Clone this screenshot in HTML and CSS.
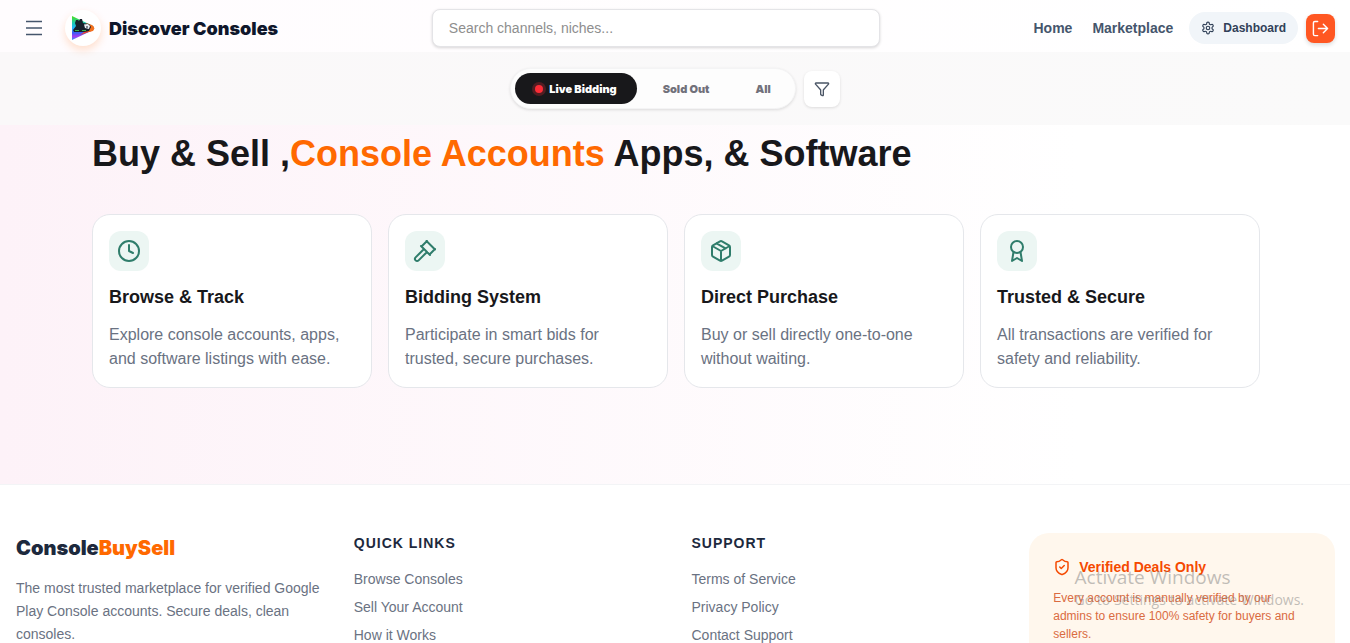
FILE: index.html
```
<!DOCTYPE html>
<html lang="en">
<head>
    <meta charset="UTF-8">
    <meta name="viewport" content="width=device-width, initial-scale=1.0">
    <title>Discover Consoles</title>
    <link rel="stylesheet" href="styles.css">
</head>
<body>
    <header class="header">
        <div class="header-left">
            <button class="menu-btn" type="button" aria-label="Open menu">
                <svg width="20" height="20" viewBox="0 0 20 20" fill="none" stroke="currentColor" stroke-width="1.5"><path d="M2 3.5h16M2 10h16M2 16.5h16"/></svg>
            </button>
            <a class="brand" href="#">
                <span class="brand-logo">
                    <svg width="24" height="26" viewBox="0 0 24 26">
                        <defs>
                            <linearGradient id="playFill" x1="0" y1="0" x2="0" y2="1">
                                <stop offset="0" stop-color="#4fe01a"/>
                                <stop offset=".3" stop-color="#19c8b4"/>
                                <stop offset=".5" stop-color="#1fb6ff"/>
                                <stop offset=".7" stop-color="#3b5bf5"/>
                                <stop offset=".85" stop-color="#a43cf0"/>
                                <stop offset="1" stop-color="#2a9bf5"/>
                            </linearGradient>
                        </defs>
                        <path d="M1 1l20 9.500q4 2.500 0 5L1 25z" fill="url(#playFill)"/>
                        <path d="M9 20l8-6 5 1-1 1z" fill="#f0452d"/>
                        <path d="M15 8l6 2q4 2.500 1 6l-5 1z" fill="#f2701d"/>
                        <path d="M4 8l1-3h2l1 1 1-2h2l1 4 6 1 2 3-2 4-5 1H3l-1-2 3-4z" fill="#16202b"/>
                        <path d="M13 9.500l4-.5 2 2-1 3-4-1z" fill="#e9edf2"/>
                        <path d="M15 12h2" stroke="#16202b"/>
                        <path d="M4 15.500h4M11 15.500h4" stroke="#37b54a"/>
                    </svg>
                </span>
                <span class="brand-name">Discover Consoles</span>
            </a>
        </div>
        <input class="search" type="search" placeholder="Search channels, niches..." aria-label="Search channels">
        <nav class="header-nav">
            <a class="nav-link" href="#">Home</a>
            <a class="nav-link" href="#">Marketplace</a>
            <a class="dashboard-link" href="#">
                <svg width="14" height="14" viewBox="0 0 24 24" fill="none" stroke="currentColor" stroke-width="2" stroke-linecap="round" stroke-linejoin="round"><path d="M12.22 2h-.44a2 2 0 0 0-2 2v.18a2 2 0 0 1-1 1.73l-.43.25a2 2 0 0 1-2 0l-.15-.08a2 2 0 0 0-2.73.73l-.22.38a2 2 0 0 0 .73 2.73l.15.1a2 2 0 0 1 1 1.72v.51a2 2 0 0 1-1 1.74l-.15.09a2 2 0 0 0-.73 2.73l.22.38a2 2 0 0 0 2.73.73l.15-.08a2 2 0 0 1 2 0l.43.25a2 2 0 0 1 1 1.73V20a2 2 0 0 0 2 2h.44a2 2 0 0 0 2-2v-.18a2 2 0 0 1 1-1.73l.43-.25a2 2 0 0 1 2 0l.15.08a2 2 0 0 0 2.73-.73l.22-.39a2 2 0 0 0-.73-2.73l-.15-.08a2 2 0 0 1-1-1.74v-.5a2 2 0 0 1 1-1.74l.15-.09a2 2 0 0 0 .73-2.73l-.22-.38a2 2 0 0 0-2.73-.73l-.15.08a2 2 0 0 1-2 0l-.43-.25a2 2 0 0 1-1-1.73V4a2 2 0 0 0-2-2z"/><circle cx="12" cy="12" r="3"/></svg>
                Dashboard
            </a>
            <button class="logout-btn" type="button" aria-label="Log out">
                <svg width="17" height="17" viewBox="0 0 24 24" fill="none" stroke="currentColor" stroke-width="2" stroke-linecap="round" stroke-linejoin="round"><path d="M8 2H4a2 2 0 0 0-2 2v16a2 2 0 0 0 2 2h4M16 18l6-6-6-6M22 12H9"/></svg>
            </button>
        </nav>
    </header>

    <div class="filter-bar">
        <div class="tabs">
            <button class="tab tab-active" type="button"><span class="live-dot"></span>Live Bidding</button>
            <button class="tab" type="button">Sold Out</button>
            <button class="tab" type="button">All</button>
        </div>
        <button class="filter-btn" type="button" aria-label="Filter">
            <svg width="16" height="16" viewBox="0 0 24 24" fill="none" stroke="currentColor" stroke-width="2" stroke-linecap="round" stroke-linejoin="round"><path d="M10 20a1 1 0 0 0 .553.895l2 1A1 1 0 0 0 14 21v-7a2 2 0 0 1 .517-1.341L21.74 4.67A1 1 0 0 0 21 3H3a1 1 0 0 0-.742 1.67l7.225 7.989A2 2 0 0 1 10 14z"/></svg>
        </button>
    </div>

    <main class="hero">
        <div class="hero-inner">
            <h1 class="hero-title">Buy &amp; Sell ,<span class="accent">Console Accounts</span> Apps, &amp; Software</h1>
            <div class="cards">
                <article class="card">
                    <div class="card-icon">
                        <svg width="24" height="24" viewBox="0 0 24 24" fill="none" stroke="currentColor" stroke-width="2" stroke-linecap="round" stroke-linejoin="round"><circle cx="12" cy="12" r="10"/><path d="M12 6v6l4 2"/></svg>
                    </div>
                    <h2 class="card-title">Browse &amp; Track</h2>
                    <p class="card-text">Explore console accounts, apps, and software listings with ease.</p>
                </article>
                <article class="card">
                    <div class="card-icon">
                        <svg width="24" height="24" viewBox="0 0 24 24" fill="none" stroke="currentColor" stroke-width="2" stroke-linecap="round" stroke-linejoin="round"><path d="M14 13l-8.400 8.400a2.100 2.100 0 0 1-3-3L11 10M8 7l9 9M13.500 2l8.500 8.500M8.500 7.500L14 2M16.500 15.500L22 10"/></svg>
                    </div>
                    <h2 class="card-title">Bidding System</h2>
                    <p class="card-text">Participate in smart bids for trusted, secure purchases.</p>
                </article>
                <article class="card">
                    <div class="card-icon">
                        <svg width="24" height="24" viewBox="0 0 24 24" fill="none" stroke="currentColor" stroke-width="2" stroke-linecap="round" stroke-linejoin="round"><path d="M11 21.730a2 2 0 0 0 2 0l7-4A2 2 0 0 0 21 16V8a2 2 0 0 0-1-1.730l-7-4a2 2 0 0 0-2 0l-7 4A2 2 0 0 0 3 8v8a2 2 0 0 0 1 1.730zM12 22V12M3.300 7L12 12l8.700-5M7.500 4.270l9 5.150"/></svg>
                    </div>
                    <h2 class="card-title">Direct Purchase</h2>
                    <p class="card-text">Buy or sell directly one-to-one without waiting.</p>
                </article>
                <article class="card">
                    <div class="card-icon">
                        <svg width="24" height="24" viewBox="0 0 24 24" fill="none" stroke="currentColor" stroke-width="2" stroke-linecap="round" stroke-linejoin="round"><circle cx="12" cy="8" r="6"/><path d="M8.500 13L7 22l5-3 5 3-1.500-9"/></svg>
                    </div>
                    <h2 class="card-title">Trusted &amp; Secure</h2>
                    <p class="card-text">All transactions are verified for safety and reliability.</p>
                </article>
            </div>
        </div>
    </main>

    <footer class="footer">
        <div class="footer-about">
            <div class="footer-brand">Console<span class="accent">BuySell</span></div>
            <p class="footer-text">The most trusted marketplace for verified Google Play Console accounts. Secure deals, clean consoles.</p>
        </div>
        <div class="footer-col">
            <h3 class="footer-heading">QUICK LINKS</h3>
            <ul class="footer-links">
                <li><a href="#">Browse Consoles</a></li>
                <li><a href="#">Sell Your Account</a></li>
                <li><a href="#">How it Works</a></li>
            </ul>
        </div>
        <div class="footer-col">
            <h3 class="footer-heading">SUPPORT</h3>
            <ul class="footer-links">
                <li><a href="#">Terms of Service</a></li>
                <li><a href="#">Privacy Policy</a></li>
                <li><a href="#">Contact Support</a></li>
            </ul>
        </div>
        <div class="verified">
            <div class="verified-title">
                <svg width="18" height="18" viewBox="0 0 24 24" fill="none" stroke="currentColor" stroke-width="2" stroke-linecap="round" stroke-linejoin="round"><path d="M20 13c0 5-3.500 7.500-7.660 8.950a1 1 0 0 1-.67-.01C7.500 20.500 4 18 4 13V6a1 1 0 0 1 1-1c2 0 4.500-1.200 6.240-2.720a1.170 1.170 0 0 1 1.520 0C14.510 3.810 17 5 19 5a1 1 0 0 1 1 1zM9 12l2 2 4-4"/></svg>
                Verified Deals Only
            </div>
            <p class="verified-text">Every account is manually verified by our admins to ensure 100% safety for buyers and sellers.</p>
        </div>
    </footer>

    <div class="watermark">
        <div class="watermark-title">Activate Windows</div>
        <div class="watermark-text">Go to Settings to activate Windows.</div>
    </div>
</body>
</html>
```
FILE: styles.css
```
* {
    box-sizing: border-box;
    margin: 0;
    padding: 0;
}
body {
    height: 100vh;
    overflow: hidden;
    font-family: "Liberation Sans", Arial, sans-serif;
    color: #18181b;
    background: #ffffff;
}
a {
    color: inherit;
    text-decoration: none;
}
button {
    border: 0;
    font-family: inherit;
    cursor: pointer;
}
svg {
    display: block;
    flex-shrink: 0;
}
.accent {
    color: #ff6900;
}

/* Header */
.header {
    display: flex;
    align-items: center;
    justify-content: space-between;
    height: 52px;
    padding: 4px 15px 0 16px;
    background: linear-gradient(to right, #fffcfe, #ffffff);
}
.header-left {
    display: flex;
    align-items: center;
    gap: 13px;
}
.menu-btn {
    padding: 8px;
    background: none;
    color: #45556c;
}
.brand {
    display: flex;
    align-items: center;
    gap: 8px;
}
.brand-logo {
    display: flex;
    align-items: center;
    justify-content: center;
    width: 36px;
    height: 36px;
    border-radius: 50%;
    background: #ffffff;
    box-shadow: 0 4px 8px rgba(255, 105, 0, 0.2);
}
.brand-name {
    font-family: Inter, "Liberation Sans", sans-serif;
    font-size: 18px;
    font-weight: 900;
    color: #0f172b;
}
.search {
    width: 448px;
    height: 38px;
    padding: 0 16px;
    border: 1px solid #e4e4e7;
    border-radius: 8px;
    background: #ffffff;
    box-shadow: 0 1px 3px rgba(0, 0, 0, 0.16);
    font-family: inherit;
    font-size: 14px;
}
.search::placeholder {
    color: #8e8e8e;
}
.header-nav {
    display: flex;
    align-items: center;
}
.nav-link {
    margin-right: 20px;
    font-size: 14px;
    font-weight: bold;
    color: #45556c;
}
.nav-link + .dashboard-link {
    margin-left: -4px;
}
.dashboard-link {
    display: flex;
    align-items: center;
    gap: 8px;
    height: 32px;
    padding: 0 12px;
    border-radius: 16px;
    background: #f1f5f9;
    font-size: 12px;
    font-weight: bold;
    color: #314158;
}
.logout-btn {
    display: flex;
    align-items: center;
    justify-content: center;
    width: 29px;
    height: 29px;
    margin-left: 8px;
    border-radius: 8px;
    background: #ff5722;
    box-shadow: 0 2px 4px rgba(0, 0, 0, 0.14);
    color: #ffffff;
}

/* Filter bar */
.filter-bar {
    display: flex;
    align-items: center;
    justify-content: center;
    gap: 8px;
    height: 73px;
    background: linear-gradient(to right, #faf8f9, #fafafa);
}
.tabs {
    display: flex;
    gap: 6px;
    padding: 4px;
    border: 1px solid #f4f4f5;
    border-radius: 21px;
    background: #fdfdfd;
    box-shadow: 0 1px 3px rgba(0, 0, 0, 0.12);
}
.tab {
    display: flex;
    align-items: center;
    gap: 6px;
    height: 31px;
    padding: 0 20px;
    border-radius: 16px;
    background: none;
    font-family: Inter, "Liberation Sans", sans-serif;
    font-size: 11px;
    font-weight: 900;
    color: #71717b;
}
.tab-active {
    background: #18181b;
    color: #ffffff;
}
.live-dot {
    width: 8px;
    height: 8px;
    border-radius: 50%;
    background: #fb2c36;
    box-shadow: 0 0 0 3px rgba(251, 44, 54, 0.25);
}
.filter-btn {
    display: flex;
    align-items: center;
    justify-content: center;
    width: 36px;
    height: 36px;
    border-radius: 8px;
    background: #ffffff;
    box-shadow: 0 1px 3px rgba(0, 0, 0, 0.12);
    color: #4a5565;
}

/* Hero */
.hero {
    padding: 5px 16px 96px 18px;
    background: linear-gradient(to right, #fdf2f8, #ffffff 80%);
}
.hero-inner {
    max-width: 1168px;
    margin: 0 auto;
}
.hero-title {
    font-size: 36px;
    line-height: 48px;
}
.cards {
    display: grid;
    grid-template-columns: repeat(4, 1fr);
    gap: 16px;
    margin-top: 36px;
}
.card {
    padding: 16px;
    border: 1px solid #e5e7eb;
    border-radius: 18px;
    background: #ffffff;
}
.card-icon {
    display: flex;
    align-items: center;
    justify-content: center;
    width: 40px;
    height: 40px;
    border-radius: 12px;
    background: #ecf6f3;
    color: #2f7d6b;
}
.card-title {
    margin-top: 12px;
    font-size: 18px;
    line-height: 28px;
    color: #18181b;
}
.card-text {
    margin-top: 12px;
    font-size: 16px;
    line-height: 24px;
    color: #6a7282;
}

/* Footer */
.footer {
    display: grid;
    grid-template-columns: repeat(4, 1fr);
    gap: 32px;
    padding: 48px 15px 48px 16px;
    border-top: 1px solid #f3f4f6;
    background: #ffffff;
}
.footer-brand {
    font-family: Inter, "Liberation Sans", sans-serif;
    font-size: 20px;
    line-height: 30px;
    font-weight: 900;
    color: #1d293d;
}
.footer-text {
    margin-top: 14px;
    font-size: 14px;
    line-height: 23px;
    color: #6a7282;
}
.footer-heading {
    font-size: 14px;
    line-height: 20px;
    letter-spacing: 1px;
    color: #1d293d;
}
.footer-links {
    display: grid;
    gap: 8px;
    margin-top: 16px;
    list-style: none;
    font-size: 14px;
    line-height: 20px;
    color: #6a7282;
}
.verified {
    padding: 24px;
    border-radius: 20px;
    background: #fff7ed;
}
.verified-title {
    display: flex;
    align-items: center;
    gap: 8px;
    font-size: 14px;
    line-height: 20px;
    font-weight: bold;
    color: #f54900;
}
.verified-text {
    margin-top: 12px;
    font-size: 12px;
    line-height: 18px;
    color: #da6b41;
}

/* System notice over the corner of the page */
.watermark {
    position: absolute;
    right: 46px;
    bottom: 33px;
    font-family: "Open Sans", "Noto Sans", sans-serif;
    color: rgba(130, 130, 130, 0.5);
    pointer-events: none;
}
.watermark-title {
    font-size: 19px;
    line-height: 25px;
}
.watermark-text {
    font-size: 14px;
    line-height: 20px;
}
```
